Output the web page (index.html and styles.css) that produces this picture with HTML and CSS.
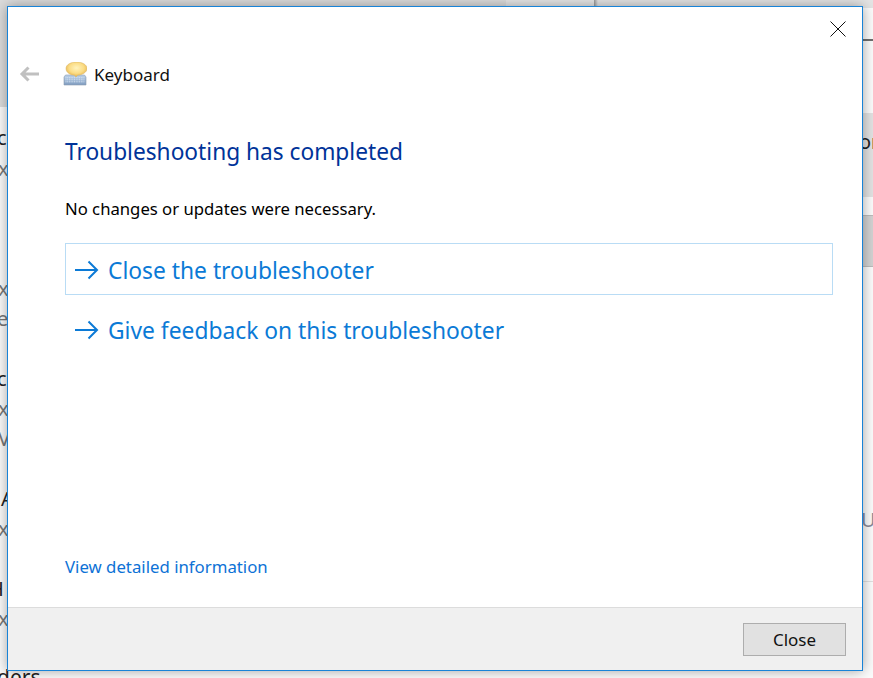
FILE: index.html
```html
<!DOCTYPE html>
<html lang="en">
<head>
<meta charset="utf-8">
<title>Keyboard troubleshooter</title>
<link rel="stylesheet" href="styles.css">
</head>
<body>
<div class="desktop">
  <div class="bg-top-a"></div>
  <div class="bg-top-b"></div>
  <div class="bg-top-c"></div>
  <div class="bg-left-top"></div>
  <div class="bg-right-line"></div>
  <div class="bg-right-panel"></div>
  <div class="bg-right-panel2"></div>
  <div class="bg-right-rule"></div>
  <span class="bg-t t-dark t1">c</span>
  <span class="bg-t t2">x</span>
  <span class="bg-t t3">x</span>
  <span class="bg-t t4">e</span>
  <span class="bg-t t-dark t5">c</span>
  <span class="bg-t t6">x</span>
  <span class="bg-t t7">V</span>
  <span class="bg-t t-dark t8">A</span>
  <span class="bg-t t9">x</span>
  <span class="bg-t t-dark t10">H</span>
  <span class="bg-t t11">x</span>
  <span class="bg-t t-dark t12">ders</span>
  <span class="bg-t t-dark t13">or</span>
  <span class="bg-t t14">U</span>

  <section class="dialog">
    <div class="dialog-body">
      <div class="titlebar">
        <button class="x-btn" aria-label="Close">
          <svg width="16" height="16" viewBox="0 0 16 16"><path d="M.5.5l15 15M15.500.5l-15 15" stroke="#111" stroke-width="1" fill="none"/></svg>
        </button>
      </div>
      <div class="navrow">
        <svg class="back" width="20" height="16" viewBox="0 0 20 16"><path d="M20 8H3M9.500 1.500L3 8l6.500 6.500" stroke="#c0c0c0" stroke-width="3" fill="none"/></svg>
        <svg class="kbd" width="24" height="24" viewBox="0 0 24 24">
          <defs>
            <radialGradient id="bub" cx=".5" cy=".4" r=".65"><stop offset="0" stop-color="#fff3bd"/><stop offset=".55" stop-color="#fbdc84"/><stop offset="1" stop-color="#dfa63c"/></radialGradient>
            <linearGradient id="key" x1="0" y1="0" x2="0" y2="1"><stop offset="0" stop-color="#bcd2ea"/><stop offset="1" stop-color="#7f9cc0"/></linearGradient>
          </defs>
          <path d="M1 15L2.500 13H21.500L23 15V23H1Z" fill="url(#key)" stroke="#8b9cb0" stroke-width=".6"/>
          <path d="M2.500 15.800h19M2.500 17.800h19M2.500 19.800h19" stroke="#e8f0fa" stroke-width=".8" stroke-dasharray="1 .7" fill="none"/>
          <path d="M13.500 0C8 0 3 2.500 3 6.500S7 13 11.500 13.200L13 15 14.500 13.200C19 13 24 10.500 24 6.500S19 0 13.500 0Z" fill="url(#bub)" stroke="#d9b565" stroke-width=".5"/>
        </svg>
        <span class="nav-title">Keyboard</span>
      </div>
      <h1 class="heading">Troubleshooting has completed</h1>
      <p class="message">No changes or updates were necessary.</p>
      <ul class="links">
        <li class="link-row focused">
          <svg class="arrow" width="24" height="20" viewBox="0 0 24 20"><path d="M0 10H22M13.500 1.500L22 10l-8.500 8.500" stroke="#0b7ad6" stroke-width="2" fill="none"/></svg>
          <span>Close the troubleshooter</span>
        </li>
        <li class="link-row">
          <svg class="arrow" width="24" height="20" viewBox="0 0 24 20"><path d="M0 10H22M13.500 1.500L22 10l-8.500 8.500" stroke="#0b7ad6" stroke-width="2" fill="none"/></svg>
          <span>Give feedback on this troubleshooter</span>
        </li>
      </ul>
      <a class="details">View detailed information</a>
    </div>
    <footer class="dialog-foot">
      <button class="close-btn">Close</button>
    </footer>
  </section>
</div>
</body>
</html>
```
FILE: styles.css
```css
html, body { margin: 0; padding: 0; }
body { font-family: "Noto Sans", "Open Sans", sans-serif; background: #fff; }
.desktop { position: relative; width: 873px; height: 678px; overflow: hidden; background: #fbfbfb; }
.bg-top-a { position: absolute; left: 0; top: 0; width: 506px; height: 8px; background: #dcdcdc; }
.bg-top-b { position: absolute; left: 506px; top: 0; width: 88px; height: 8px; background: #e6e6e6; }
.bg-top-c { position: absolute; left: 594px; top: 0; width: 279px; height: 8px; background: linear-gradient(90deg, #999 0, #e4e4e4 4px); }
.bg-left-top { position: absolute; left: 0; top: 0; width: 8px; height: 107px; background: #dcdcdc; }
.bg-right-line { position: absolute; left: 863px; top: 39px; width: 10px; height: 2px; background: #6e6e6e; }
.bg-right-panel { position: absolute; left: 863px; top: 113px; width: 10px; height: 84px; background: #e2e2e2; }
.bg-right-panel2 { position: absolute; left: 863px; top: 215px; width: 10px; height: 50px; background: #d2d2d2; border-top: 1px solid #bbb; border-bottom: 1px solid #bbb; }
.bg-right-rule { position: absolute; left: 863px; top: 581px; width: 10px; height: 1px; background: #e0e0e0; }
.bg-t { position: absolute; font-size: 20px; line-height: 24px; color: #777; }
.t-dark { color: #222; }
.t1 { left: -3px; top: 126px; }
.t2 { left: -2px; top: 157px; }
.t3 { left: -2px; top: 277px; }
.t4 { left: -3px; top: 307px; }
.t5 { left: -3px; top: 367px; }
.t6 { left: -2px; top: 397px; }
.t7 { left: -2px; top: 427px; }
.t8 { left: 1px; top: 487px; }
.t9 { left: -2px; top: 517px; }
.t10 { left: -11px; top: 577px; }
.t11 { left: -2px; top: 607px; }
.t12 { left: -3px; top: 665px; font-size: 21px; }
.t13 { left: 859px; top: 130px; }
.t14 { left: 861px; top: 508px; color: #8a8a9a; }

.dialog { position: absolute; left: 7px; top: 6px; width: 854px; height: 663px; display: flex; flex-direction: column; background: #fff; border: 1px solid #1883d7; box-shadow: 0 0 12px rgba(0,0,0,.35); }
.dialog-body { flex: 1; display: flex; flex-direction: column; padding: 0 29px 0 57px; min-height: 0; }
.titlebar { display: flex; justify-content: flex-end; height: 45px; margin-right: -29px; }
.x-btn { border: 0; background: none; padding: 0; margin: 14px 16px 0 0; width: 16px; height: 16px; }
.x-btn svg { display: block; }
.navrow { display: flex; align-items: center; height: 46px; position: relative; }
.back { position: absolute; left: -46px; top: 14px; }
.kbd { margin-left: -2px; margin-top: -2px; }
.nav-title { font-size: 17px; color: #111; margin-left: 7px; margin-top: -2px; }
.heading { margin: 38px 0 0; font-size: 22.700px; line-height: 32px; font-weight: 400; color: #003399; }
.message { margin: 30px 0 0; font-size: 16.700px; line-height: 22px; color: #000; }
.links { list-style: none; margin: 23px 0 0; padding: 0; }
.link-row { display: flex; align-items: center; box-sizing: border-box; height: 52px; padding: 2px 0 0 9px; font-size: 22.800px; color: #0b7ad6; border: 1px solid transparent; margin-bottom: 8px; }
.link-row.focused { border-color: #b9dcf5; }
.arrow { margin-right: 9px; flex: none; }
.details { margin-top: auto; margin-bottom: 28px; font-size: 16.800px; line-height: 24px; color: #0d72d6; }
.dialog-foot { height: 63px; flex: none; display: flex; justify-content: flex-end; align-items: flex-start; background: #f0f0f0; border-top: 1px solid #dcdcdc; padding: 15px 16px 0 0; box-sizing: border-box; }
.close-btn { width: 103px; height: 33px; box-sizing: border-box; background: #e1e1e1; border: 1px solid #adadad; font: inherit; font-size: 17px; color: #111; padding: 0; }
```
